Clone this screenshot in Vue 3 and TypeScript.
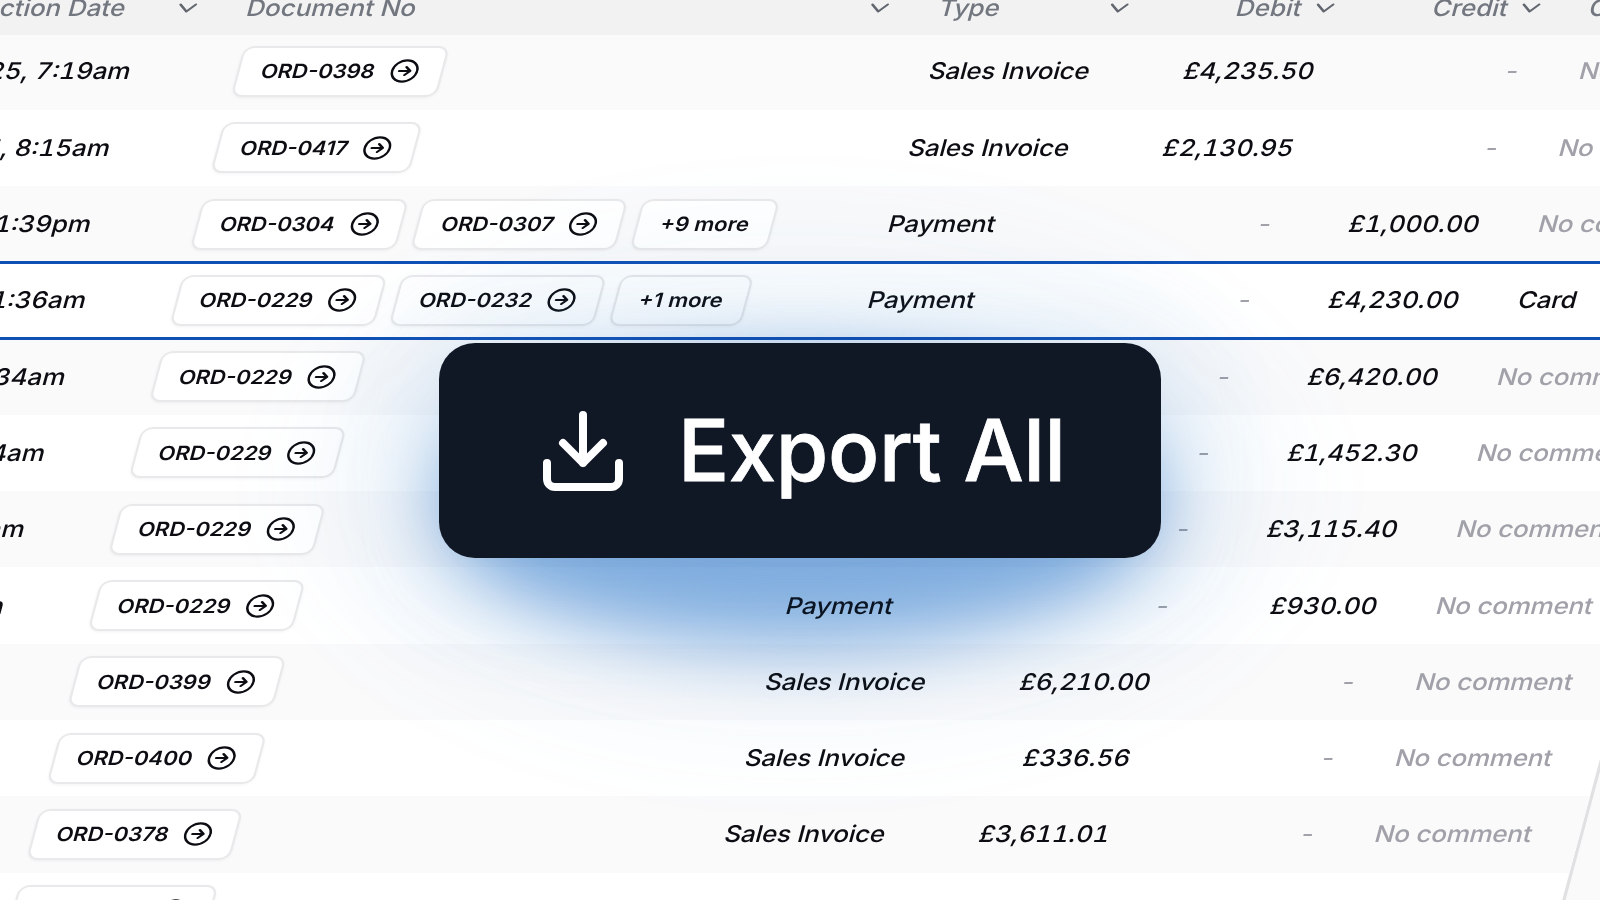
<script setup lang="ts">
interface Row {
  date: string
  docs: string[]
  more?: string
  type: string
  debit: string
  credit: string
  comment?: string
  active?: boolean
}

const columns = [
  { key: 'date', label: 'Transaction Date' },
  { key: 'docs', label: 'Document No' },
  { key: 'type', label: 'Type' },
  { key: 'debit', label: 'Debit' },
  { key: 'credit', label: 'Credit' },
  { key: 'comment', label: 'Comment' },
]

const rows: Row[] = [
  { date: '2025, 7:19am', docs: ['ORD-0398'], type: 'Sales Invoice', debit: '£4,235.50', credit: '-' },
  { date: '2025, 8:15am', docs: ['ORD-0417'], type: 'Sales Invoice', debit: '£2,130.95', credit: '-' },
  { date: '2025, 1:39pm', docs: ['ORD-0304', 'ORD-0307'], more: '+9 more', type: 'Payment', debit: '-', credit: '£1,000.00' },
  { date: '2025, 11:36am', docs: ['ORD-0229', 'ORD-0232'], more: '+1 more', type: 'Payment', debit: '-', credit: '£4,230.00', comment: 'Card', active: true },
  { date: '2025, 11:34am', docs: ['ORD-0229'], type: 'Payment', debit: '-', credit: '£6,420.00' },
  { date: '2025, 10:54am', docs: ['ORD-0229'], type: 'Payment', debit: '-', credit: '£1,452.30' },
  { date: '2025, 10:49am', docs: ['ORD-0229'], type: 'Payment', debit: '-', credit: '£3,115.40' },
  { date: '2025, 10:42am', docs: ['ORD-0229'], type: 'Payment', debit: '-', credit: '£930.00' },
  { date: '2025, 9:30am', docs: ['ORD-0399'], type: 'Sales Invoice', debit: '£6,210.00', credit: '-' },
  { date: '2025, 9:12am', docs: ['ORD-0400'], type: 'Sales Invoice', debit: '£336.56', credit: '-' },
  { date: '2025, 8:47am', docs: ['ORD-0378'], type: 'Sales Invoice', debit: '£3,611.01', credit: '-' },
  { date: '2025, 8:21am', docs: ['ORD-0371'], type: 'Sales Invoice', debit: '£512.00', credit: '-' },
]
</script>

<template>
  <main class="stage">
    <div class="table">
      <div class="line head">
        <div v-for="c in columns" :key="c.key" class="cell" :class="'c-' + c.key">
          <span>{{ c.label }}</span>
          <svg v-if="c.key !== 'comment'" class="chevron" viewBox="0 0 16 10"><path d="M1.5 1.5 8 8l6.5-6.5" /></svg>
        </div>
      </div>
      <div v-for="(r, i) in rows" :key="i" class="line row" :class="{ odd: i % 2 === 0, active: r.active }">
        <div class="cell c-date">{{ r.date }}</div>
        <div class="cell c-docs">
          <span v-for="d in r.docs" :key="d" class="pill">
            {{ d }}
            <svg class="go" viewBox="0 0 24 24" preserveAspectRatio="none">
              <circle cx="12" cy="12" r="10.6" />
              <path d="M7.3 12h9M12.7 8l4 4-4 4" />
            </svg>
          </span>
          <span v-if="r.more" class="pill more">{{ r.more }}</span>
        </div>
        <div class="cell c-type">{{ r.type }}</div>
        <div class="cell c-debit" :class="{ muted: r.debit === '-' }">{{ r.debit }}</div>
        <div class="cell c-credit" :class="{ muted: r.credit === '-' }">{{ r.credit }}</div>
        <div class="cell c-comment" :class="{ muted: !r.comment }">{{ r.comment ?? 'No comment' }}</div>
      </div>
    </div>
    <div class="halo"></div>
    <div class="glow"></div>
    <button class="export">
      <svg class="download" viewBox="0 0 24 24">
        <path d="M21 15v4a2 2 0 0 1-2 2H5a2 2 0 0 1-2-2v-4" />
        <path d="M7 10l5 5 5-5M12 15V3" />
      </svg>
      <span>Export All</span>
    </button>
  </main>
</template>

<style>
body { margin: 0; overflow: hidden; }
</style>

<style scoped>
.stage {
  position: relative;
  width: 1600px;
  height: 900px;
  overflow: hidden;
  background: #fafafa;
  font-family: Inter, "Liberation Sans", sans-serif;
}
.table {
  position: absolute;
  left: 0;
  top: -43px;
  width: 1606px;
  transform-origin: 0 43px;
  transform: skewX(-15deg) scaleX(1.125);
  border-right: 3px solid #e1e1e3;
  box-sizing: border-box;
  background: #fff;
  color: #0c0d12;
  font-size: 23px;
  font-weight: 500;
}
.line {
  display: grid;
  grid-template-columns: 204.5px 622px 217px 142px 183.4px 1fr;
  height: 76.3px;
  box-sizing: border-box;
}
.head {
  background: #f2f2f3;
  box-shadow: 0 2px 0 #f2f2f3;
  position: relative;
  color: #72767f;
  padding-top: 26px;
}
.head .cell { height: 50px; }
.odd { background: #fafafb; }
.active {
  position: relative;
}
.active::after {
  content: "";
  position: absolute;
  inset: -1.5px 0;
  border: solid #0f50b5;
  border-width: 3px 0;
}
.cell {
  display: flex;
  align-items: center;
  white-space: nowrap;
  min-width: 0;
}
.row .cell { font-variant-numeric: tabular-nums; }
.c-date { margin-left: -23px; }
.head .c-date { margin-left: -72.7px; justify-content: space-between; padding-right: 27.4px; }
.c-docs { gap: 12.8px; padding-left: 23px; }
.head .c-docs { justify-content: space-between; padding-left: 17px; padding-right: 34.6px; }
.c-type { padding-left: 16.8px; letter-spacing: -0.18px; }
.head .c-type { justify-content: space-between; padding-left: 10.5px; padding-right: 38.8px; }
.c-debit, .c-credit { justify-content: flex-end; }
.head .c-debit, .head .c-credit { gap: 11.5px; margin-right: -2px; }
.c-comment { padding-left: 52.4px; letter-spacing: -0.15px; }
.head .c-comment { padding-left: 46px; }
.muted { color: #a0a1a9; }
.chevron {
  width: 16.8px;
  height: 10.5px;
  fill: none;
  stroke: #62666f;
  stroke-width: 2;
  stroke-linecap: round;
  stroke-linejoin: round;
}
.pill {
  display: flex;
  align-items: center;
  justify-content: space-between;
  box-sizing: border-box;
  height: 51px;
  padding: 0 19.7px;
  gap: 13.4px;
  border: 2px solid #e9e9eb;
  border-radius: 10px;
  background: #fff;
  box-shadow: 0 1px 3px rgba(0, 0, 0, 0.05);
  font-size: 19.5px;
  font-weight: 600;
  font-variant-numeric: normal;
}
.go {
  width: 25.2px;
  height: 24px;
  fill: none;
  stroke: #0c0d12;
  stroke-width: 2.1;
  stroke-linecap: round;
  stroke-linejoin: round;
}
.halo {
  position: absolute;
  left: 290px;
  top: 210px;
  width: 1020px;
  height: 550px;
  border-radius: 50%;
  background: rgba(70, 130, 190, 0.035);
  filter: blur(36px);
}
.glow {
  position: absolute;
  left: 442px;
  top: 364px;
  width: 716px;
  height: 284px;
  border-radius: 50%;
  background: #91b9e5;
  filter: blur(36px);
  mix-blend-mode: multiply;
}
.export {
  position: absolute;
  left: 439px;
  top: 343px;
  width: 722px;
  height: 215px;
  display: flex;
  align-items: center;
  gap: 47px;
  padding: 0 0 0 96px;
  border: 0;
  border-radius: 36px;
  background: #101725;
  color: #fff;
  font-family: inherit;
  font-size: 85px;
  font-weight: 500;
  letter-spacing: -0.4px;
  -webkit-text-stroke: 0.8px #fff;
  white-space: nowrap;
  box-shadow: 0 20px 120px rgba(43, 118, 195, 0.24);
}
.download {
  width: 96px;
  height: 96px;
  fill: none;
  stroke: #fff;
  stroke-width: 2;
  stroke-linecap: round;
  stroke-linejoin: round;
}
</style>
